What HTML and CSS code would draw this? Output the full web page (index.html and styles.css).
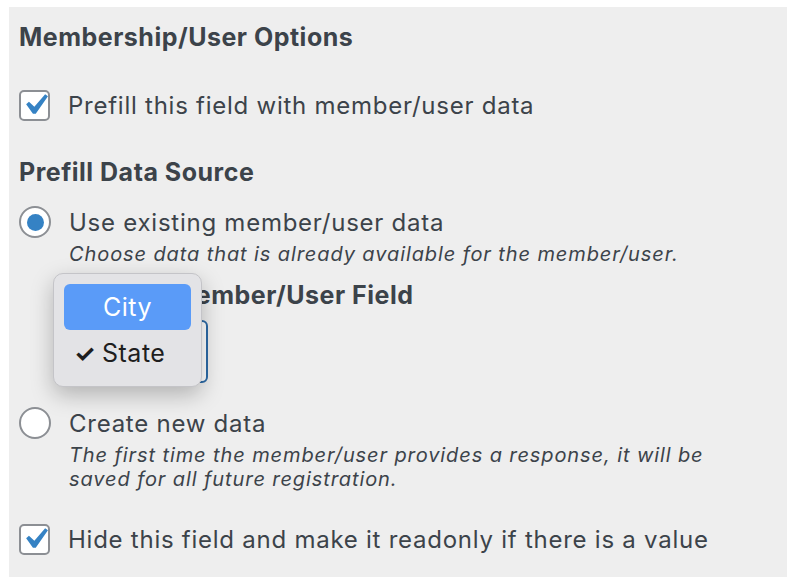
FILE: index.html
```html
<!DOCTYPE html>
<html lang="en">
<head>
    <meta charset="UTF-8">
    <meta name="viewport" content="width=device-width, initial-scale=1.0">
    <title>Membership/User Options</title>
    <link rel="stylesheet" href="styles.css">
</head>
<body>
    <div class="panel">
        <h2 class="section-title">Membership/User Options</h2>
        <label class="option option-first">
            <span class="checkbox">
                <svg viewBox="0 0 20 20"><path d="M14.83 4.89l1.34.94-5.81 8.38H9.02L5.78 9.67l1.34-1.25 2.57 2.4z"/></svg>
            </span>
            <span class="option-text">Prefill this field with member/user data</span>
        </label>

        <h2 class="section-title source-title">Prefill Data Source</h2>
        <label class="option option-radio">
            <span class="radio checked"></span>
            <span class="option-text">Use existing member/user data</span>
        </label>
        <p class="hint">Choose data that is already available for the member/user.</p>

        <div class="field">
            <div class="field-label">Choose Member/User Field</div>
            <div class="select-wrap">
                <div class="select"></div>
                <!-- open dropdown menu -->
                <ul class="popup">
                    <li class="popup-item active">City</li>
                    <li class="popup-item"><span class="tick">✓</span>State</li>
                </ul>
            </div>
        </div>

        <label class="option option-radio2">
            <span class="radio"></span>
            <span class="option-text">Create new data</span>
        </label>
        <p class="hint">The first time the member/user provides a response, it will be<br>saved for all future registration.</p>

        <label class="option option-last">
            <span class="checkbox">
                <svg viewBox="0 0 20 20"><path d="M14.83 4.89l1.34.94-5.81 8.38H9.02L5.78 9.67l1.34-1.25 2.57 2.4z"/></svg>
            </span>
            <span class="option-text">Hide this field and make it readonly if there is a value</span>
        </label>
    </div>
</body>
</html>
```

FILE: styles.css
```css
body {
    margin: 0;
    padding: 0;
    background: #ffffff;
    font-family: Inter, 'Noto Sans', sans-serif;
    color: #3c434a;
}
.panel {
    box-sizing: border-box;
    width: 778px;
    height: 570px;
    margin: 7px 0 0 9px;
    padding: 15px 0 0 10px;
    background: #eeeeee;
}
.section-title {
    margin: 0;
    font-size: 25px;
    line-height: 30px;
    font-weight: 700;
    letter-spacing: 0.5px;
}
.source-title {
    margin-top: 36px;
}
.option {
    display: flex;
    align-items: center;
    gap: 18px;
    height: 32px;
}
.option-first {
    margin-top: 37px;
}
.option-radio {
    margin-top: 19px;
}
.option-radio2 {
    margin-top: 24px;
}
.option-last {
    margin-top: 32px;
}
.option-text {
    font-size: 24px;
    letter-spacing: 0.75px;
}
.checkbox {
    box-sizing: border-box;
    display: flex;
    align-items: center;
    justify-content: center;
    width: 31px;
    height: 31px;
    border: 2px solid #8c8f94;
    border-radius: 5px;
    background: #ffffff;
}
.checkbox svg {
    width: 42px;
    height: 42px;
    flex: none;
    fill: #3582c4;
}
.radio {
    box-sizing: border-box;
    display: flex;
    align-items: center;
    justify-content: center;
    width: 32px;
    height: 32px;
    border: 2px solid #8c8f94;
    border-radius: 50%;
    background: #ffffff;
}
.radio.checked::after {
    content: "";
    width: 17px;
    height: 17px;
    border-radius: 50%;
    background: #3582c4;
}
.hint {
    margin: 4px 0 0 50px;
    font-size: 20px;
    line-height: 24px;
    font-style: italic;
    letter-spacing: 0.9px;
}
.field {
    margin: 14px 0 0 50px;
}
.field-label {
    font-size: 25px;
    line-height: 30px;
    font-weight: 700;
    letter-spacing: 0.5px;
}
.select-wrap {
    position: relative;
    margin-top: 10px;
}
.select {
    box-sizing: border-box;
    width: 139px;
    height: 63px;
    border: 2px solid #2c6aa6;
    border-radius: 6px;
    background: #ffffff;
}
.popup {
    position: absolute;
    left: -16px;
    top: -47px;
    box-sizing: border-box;
    width: 149px;
    margin: 0;
    padding: 10px;
    list-style: none;
    background: #e3e3e6;
    border: 1px solid #c4c4c8;
    border-radius: 10px;
    box-shadow: 0 8px 22px rgba(0, 0, 0, 0.25);
    color: #1e1e1e;
}
.popup-item {
    height: 46px;
    line-height: 46px;
    font-size: 25px;
    letter-spacing: 0.5px;
    padding-left: 10px;
    border-radius: 6px;
}
.popup-item.active {
    background: #5a9bf8;
    color: #ffffff;
    text-align: center;
    padding-left: 0;
}
.tick {
    display: inline-block;
    width: 28px;
    font-size: 24px;
    font-weight: 700;
}
```
